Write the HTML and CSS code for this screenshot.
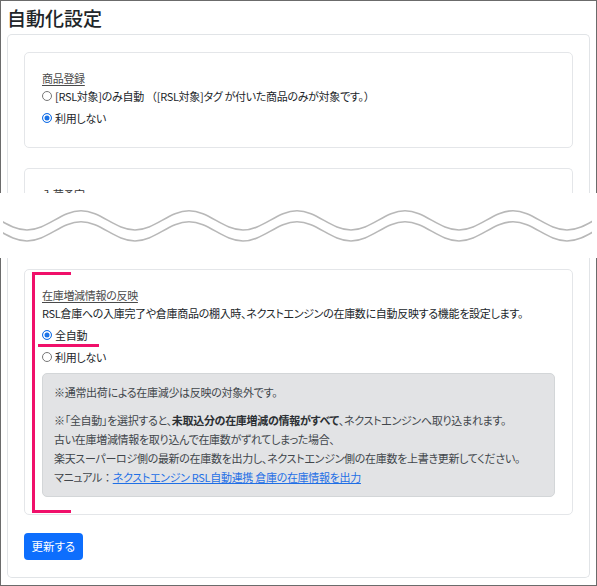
FILE: index.html
```html
<!DOCTYPE html>
<html lang="ja">
<head>
<meta charset="utf-8">
<title>自動化設定</title>
<link rel="stylesheet" href="styles.css">
</head>
<body>
<div class="frame">
  <div class="sec-top">
    <h1 class="title">自動化設定</h1>
    <div class="outer outer-top">
      <div class="card card-first">
        <div class="label">商品登録</div>
        <label class="radio"><input type="radio" name="a"><span>[RSL対象]のみ自動 <span class="full">（</span>[RSL対象]タグ が付いた商品のみが対象です。<span class="full">）</span></span></label>
        <label class="radio"><input type="radio" name="a" checked><span>利用しない</span></label>
      </div>
      <div class="card card-cut">
        <div class="label plain">入荷予定</div>
      </div>
    </div>
  </div>
  <div class="cut">
    <svg class="wave" width="589" height="65" viewBox="3 0 589 65" xmlns="http://www.w3.org/2000/svg">
      <path d="M-81,37 C-61.33,37 -46.67,17.7 -27,17.7 S7.33,37 27,37 S61.33,17.7 81,17.7 S115.33,37 135,37 S169.33,17.7 189,17.7 S223.33,37 243,37 S277.33,17.7 297,17.7 S331.33,37 351,37 S385.33,17.7 405,17.7 S439.33,37 459,37 S493.33,17.7 513,17.7 S547.33,37 567,37 S601.33,17.7 621,17.7 S655.33,37 675,37" fill="none" stroke="#b8b8b8" stroke-width="1.6"/>
      <path transform="translate(0 11)" d="M-81,37 C-61.33,37 -46.67,17.7 -27,17.7 S7.33,37 27,37 S61.33,17.7 81,17.7 S115.33,37 135,37 S169.33,17.7 189,17.7 S223.33,37 243,37 S277.33,17.7 297,17.7 S331.33,37 351,37 S385.33,17.7 405,17.7 S439.33,37 459,37 S493.33,17.7 513,17.7 S547.33,37 567,37 S601.33,17.7 621,17.7 S655.33,37 675,37" fill="none" stroke="#b8b8b8" stroke-width="1.6"/>
    </svg>
  </div>
  <div class="sec-bottom">
    <div class="outer outer-bottom">
      <div class="card card-stock">
        <div class="label">在庫増減情報の反映</div>
        <div class="desc">RSL倉庫への入庫完了や倉庫商品の棚入時、ネクストエンジンの在庫数に自動反映する機能を設定します。</div>
        <label class="radio"><input type="radio" name="b" checked><span>全自動</span></label>
        <label class="radio"><input type="radio" name="b"><span>利用しない</span></label>
        <div class="note">
          <p>※通常出荷による在庫減少は反映の対象外です。</p>
          <p>※「全自動」を選択すると、<b>未取込分の在庫増減の情報がすべて</b>、ネクストエンジンへ取り込まれます。<br>古い在庫増減情報を取り込んで在庫数がずれてしまった場合、<br>楽天スーパーロジ側の最新の在庫数を出力し、ネクストエンジン側の在庫数を上書き更新してください。<br>マニュアル<span class="full">：</span><a href="#">ネクストエンジン RSL自動連携 倉庫の在庫情報を出力</a></p>
        </div>
        <div class="mark-bracket"></div>
        <div class="mark-underline"></div>
      </div>
      <button class="btn" type="button">更新する</button>
    </div>
  </div>
</div>
</body>
</html>
```

FILE: styles.css
```css
* { box-sizing: border-box; }
html, body { margin: 0; padding: 0; background: #fff; }
body {
  font-family: "Noto Sans CJK JP", "Noto Sans", sans-serif;
  font-feature-settings: "palt";
  font-size: 11px;
  letter-spacing: -0.3px;
  color: #212529;
}
.full { font-feature-settings: normal; }
.frame { width: 597px; height: 586px; overflow: hidden; }
.sec-top {
  height: 193px;
  border: 1px solid #6b6b6b;
  border-bottom: 0;
  padding: 0 6px;
  overflow: hidden;
}
.title {
  margin: 0 0 3px;
  padding-top: 3px;
  font-size: 19px;
  line-height: 27px;
  font-weight: 500;
  letter-spacing: 0;
  color: #212529;
}
.outer { border: 1px solid #e1e4e7; }
.outer-top {
  border-bottom: 0;
  border-radius: 5px 5px 0 0;
  padding: 17px 16px 0;
}
.outer-bottom {
  border-top: 0;
  border-radius: 0 0 5px 5px;
  padding: 11px 16px 17px;
}
.card {
  border: 1px solid #e4e6e9;
  border-radius: 5px;
  padding: 16px 17px 17px;
}
.card-first { margin-bottom: 20px; padding-bottom: 16px; }
.card-cut { border-bottom: 0; border-radius: 5px 5px 0 0; height: 40px; }
.card-stock { position: relative; }
.label {
  line-height: 18px;
  color: #4a4a4a;
  text-decoration: underline;
  text-underline-offset: 2px;
}
.label.plain { text-decoration: none; color: #333; }
.desc { line-height: 18px; margin-bottom: 4px; }
.radio {
  display: flex;
  align-items: center;
  line-height: 18px;
  height: 18px;
  margin-bottom: 4px;
}
.radio input {
  appearance: none;
  -webkit-appearance: none;
  width: 10px;
  height: 10px;
  margin: 0 3px 0 0;
  border: 1px solid #777;
  border-radius: 50%;
  background: #fff;
  flex: none;
}
.radio input:checked {
  border-color: #1a73e8;
  background: #1a73e8;
  box-shadow: inset 0 0 0 1.5px #fff;
}
.note {
  margin-top: 7px;
  height: 124px;
  background: #e2e3e5;
  border: 1px solid #d3d6d8;
  border-radius: 5px;
  padding: 9px 11px;
  color: #41464b;
  line-height: 19px;
}
.note p { margin: 0 0 9px; }
.note p:last-child { margin-bottom: 0; }
.note b { color: #2b2f33; font-weight: 700; }
.note a { color: #1f6fe5; text-decoration: underline; }
.mark-bracket {
  position: absolute;
  left: 7px;
  top: 2px;
  width: 39px;
  height: 241px;
  border-left: 3px solid #f0106a;
  border-top: 3px solid #f0106a;
  border-bottom: 3px solid #f0106a;
}
.mark-underline {
  position: absolute;
  left: 13px;
  top: 74px;
  width: 61px;
  height: 3px;
  background: #f0106a;
}
.btn {
  margin-top: 18px;
  height: 27px;
  padding: 0 7.5px;
  border: 0;
  border-radius: 4px;
  background: #0d6efd;
  color: #fff;
  font-family: inherit;
  font-feature-settings: "palt";
  font-size: 11.5px;
  line-height: 27px;
}
.cut { height: 65px; background: #fff; padding-left: 3px; }
.wave { display: block; }
.sec-bottom {
  height: 328px;
  border: 1px solid #6b6b6b;
  border-top: 0;
  padding: 0 6px 7px;
}
```
